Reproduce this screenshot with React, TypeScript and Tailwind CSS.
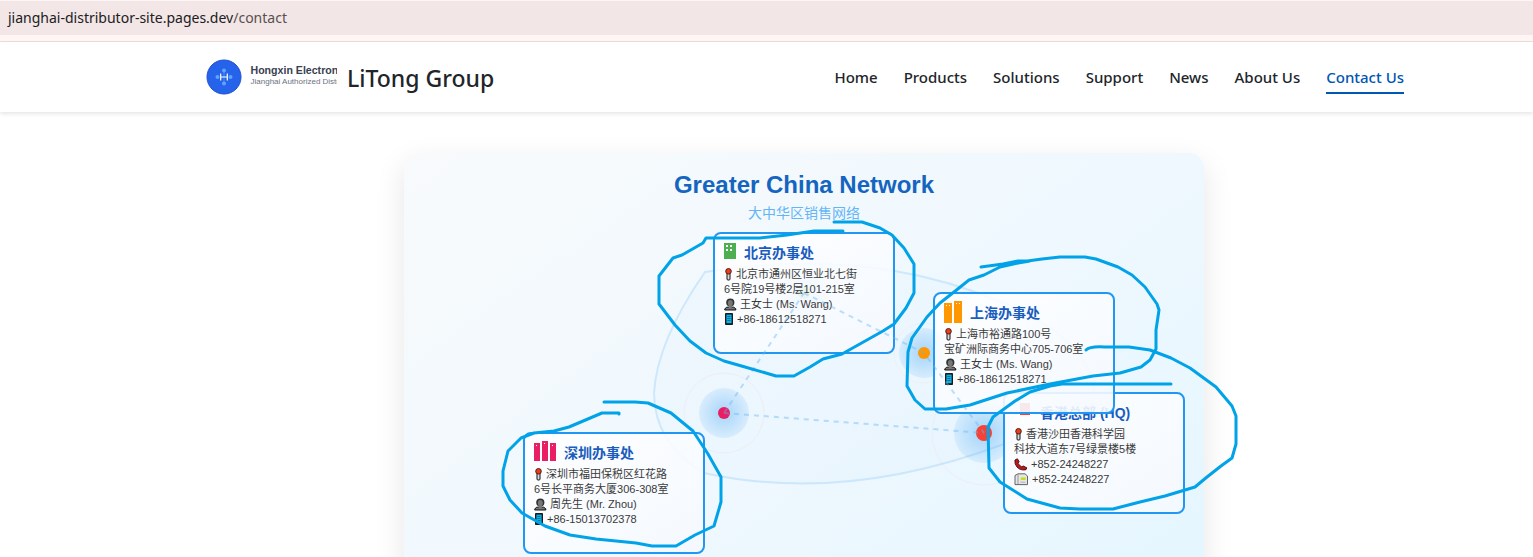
import type { ReactNode } from "react";

const navLinks = ["Home", "Products", "Solutions", "Support", "News", "About Us", "Contact Us"];

function PinIcon() {
  return (
    <svg width="9" height="14" viewBox="0 0 9 14" aria-hidden="true">
      <rect x="3" y="5" width="3" height="7" rx="1" fill="#ddd" stroke="#111" strokeWidth="1" />
      <circle cx="4.5" cy="3.3" r="2.8" fill="#f03a17" stroke="#3a1a14" strokeWidth="0.9" />
    </svg>
  );
}

function PersonIcon() {
  return (
    <svg width="13" height="14" viewBox="0 0 13 14" aria-hidden="true">
      <path d="M0.8 12V10.8L2.8 9.2h7L11.8 10.8V12Z" fill="#777" stroke="#111" strokeWidth="1" />
      <circle cx="6.3" cy="4.6" r="4.1" fill="#333" />
      <rect x="4.8" y="7" width="3" height="3" fill="#777" />
      <ellipse cx="6.3" cy="5" rx="2.5" ry="3" fill="#777" />
    </svg>
  );
}

function MobileIcon() {
  return (
    <svg width="10" height="14" viewBox="0 0 10 14" aria-hidden="true">
      <rect x="1" y="0" width="8" height="12" rx="0.8" fill="#1b1b1b" />
      <rect x="2.4" y="1.6" width="5.2" height="8.6" fill="#0db4e8" />
      <path d="M3.3 3.5h3.2M3.3 5.5h3.2M3.3 7.5h3.2" stroke="#075f86" strokeWidth="0.8" />
    </svg>
  );
}

function PhoneIcon() {
  return (
    <svg width="14" height="14" viewBox="0 0 14 14" aria-hidden="true">
      <path
        d="M1 2 3.4 0.8 5.2 3.8 4 5.2Q5.2 7.7 7.8 8.9L9.2 8 12.8 9.8 12 11.7Q6.2 12.8 3 9 0.3 5.9 1 2Z"
        fill="#c4161c"
        stroke="#3a0c0c"
        strokeWidth="0.9"
      />
    </svg>
  );
}

function FaxIcon() {
  return (
    <svg width="15" height="14" viewBox="0 0 15 14" aria-hidden="true">
      <path d="M1 2.5 4 0.8H11L13.5 3V11.6H1Z" fill="#e6e6e6" stroke="#555" strokeWidth="0.9" />
      <path d="M4 1V11" stroke="#999" strokeWidth="1" />
      <path d="M6.8 4.4h4.8v2.6H6.8Z" fill="#c3e020" />
      <path d="M6.5 9.2h5" stroke="#aaa" strokeWidth="0.9" />
    </svg>
  );
}

const icons: Record<string, () => ReactNode> = {
  pin: PinIcon,
  person: PersonIcon,
  mobile: MobileIcon,
  phone: PhoneIcon,
  fax: FaxIcon,
};

interface Office {
  name: string;
  place: string;
  building: ReactNode;
  lines: { icon?: string; text: string }[];
}

const offices: Office[] = [
  {
    name: "北京办事处",
    place: "left-[309px] top-[79px]",
    building: (
      <svg width="12" height="22" viewBox="0 0 12 22" aria-hidden="true">
        <rect y="2" width="12" height="16" fill="#4caf50" />
        <path d="M2 4h2v2h-2ZM6 4h2v2h-2ZM2 8h2v2h-2ZM6 8h2v2h-2Z" fill="#fff" />
      </svg>
    ),
    lines: [
      { icon: "pin", text: "北京市通州区恒业北七街" },
      { text: "6号院19号楼2层101-215室" },
      { icon: "person", text: "王女士 (Ms. Wang)" },
      { icon: "mobile", text: "+86-18612518271" },
    ],
  },
  {
    name: "香港总部 (HQ)",
    place: "left-[599px] top-[239px]",
    building: (
      <svg width="18" height="22" viewBox="0 0 18 22" aria-hidden="true">
        <rect x="6" y="2" width="10" height="12" fill="#f44336" />
      </svg>
    ),
    lines: [
      { icon: "pin", text: "香港沙田香港科学园" },
      { text: "科技大道东7号绿景楼5楼" },
      { icon: "phone", text: "+852-24248227" },
      { icon: "fax", text: "+852-24248227" },
    ],
  },
  {
    name: "上海办事处",
    place: "left-[529px] top-[139px]",
    building: (
      <svg width="18" height="22" viewBox="0 0 18 22" aria-hidden="true">
        <path d="M0 2h8v20h-8ZM10 0h8v22h-8Z" fill="#ff9800" />
        <path d="M2 4h1v1h-1ZM5 4h1v1h-1ZM12 2h1v1h-1ZM15 2h1v1h-1Z" fill="#fff" />
      </svg>
    ),
    lines: [
      { icon: "pin", text: "上海市裕通路100号" },
      { text: "宝矿洲际商务中心705-706室" },
      { icon: "person", text: "王女士 (Ms. Wang)" },
      { icon: "mobile", text: "+86-18612518271" },
    ],
  },
  {
    name: "深圳办事处",
    place: "left-[119px] top-[279px]",
    building: (
      <svg width="22" height="22" viewBox="0 0 22 22" aria-hidden="true">
        <path d="M0 2h6v18h-6ZM8 0h6v20h-6ZM16 2h6v18h-6Z" fill="#e91e63" />
        <path d="M2 4h1v1h-1ZM10 2h1v1h-1ZM18 4h1v1h-1Z" fill="#fff" />
      </svg>
    ),
    lines: [
      { icon: "pin", text: "深圳市福田保税区红花路" },
      { text: "6号长平商务大厦306-308室" },
      { icon: "person", text: "周先生 (Mr. Zhou)" },
      { icon: "mobile", text: "+86-15013702378" },
    ],
  },
];

function OfficeCard({ office }: { office: Office }) {
  return (
    <article
      className={`absolute h-[122px] w-[182px] rounded-lg border-2 border-[#2196f3] bg-linear-to-br from-white/90 to-[#f5f9ff]/90 px-[9px] pt-[7px] ${office.place}`}
    >
      <h3 className="mb-1 flex h-[22px] gap-2 text-sm leading-6 font-bold text-[#1a5dbe]">
        {office.building}
        {office.name}
      </h3>
      {office.lines.map((line, i) => {
        const Icon = line.icon ? icons[line.icon] : null;
        return (
          <p key={i} className="flex h-[15px] items-center gap-[3px] text-[11px] whitespace-nowrap text-[#3a3a3a]">
            {Icon && <Icon />}
            {line.text}
          </p>
        );
      })}
    </article>
  );
}

const markers = [
  { x: 400, y: 140, r: 6, halo: 25, ring: 50, color: "#4caf50" },
  { x: 520, y: 200, r: 6, halo: 25, ring: 30, color: "#ff9800" },
  { x: 320, y: 260, r: 6, halo: 25, ring: 40, color: "#e91e63" },
  { x: 580, y: 280, r: 8, halo: 30, ring: 52, color: "#f44336" },
];

function MapBackdrop() {
  return (
    <svg className="absolute inset-0" width="800" height="600" viewBox="0 0 800 600" aria-hidden="true">
      <defs>
        <radialGradient id="halo">
          <stop offset="0" stopColor="#2196f3" stopOpacity="0.35" />
          <stop offset="1" stopColor="#2196f3" stopOpacity="0.1" />
        </radialGradient>
      </defs>
      <path
        d="M301 119Q400 103 491 118Q545 127 600 150Q690 190 690 240Q665 275 600 291Q440 351 300 320Q250 290 250 240Q253 188 301 119Z"
        fill="#e3f2fd"
        fillOpacity="0.2"
        stroke="#bbdefb"
        strokeOpacity="0.65"
        strokeWidth="2"
      />
      {markers.map((m) => (
        <g key={m.color}>
          <circle cx={m.x} cy={m.y} r={m.ring} fill="none" stroke={m.color} strokeOpacity="0.05" />
          <circle cx={m.x} cy={m.y} r={m.halo} fill="url(#halo)" />
          <circle cx={m.x} cy={m.y} r={m.r} fill={m.color} />
        </g>
      ))}
    </svg>
  );
}

function Connections() {
  return (
    <svg
      className="pointer-events-none absolute inset-0"
      width="800"
      height="600"
      viewBox="0 0 800 600"
      aria-hidden="true"
    >
      <path
        d="M400 140L520 200L580 280M320 260L400 140M320 260L580 280"
        fill="none"
        stroke="#64b5f6"
        strokeOpacity="0.42"
        strokeWidth="2"
        strokeDasharray="5 5"
      />
    </svg>
  );
}

/* Freehand review marks circling each office card. */
function ReviewMarks() {
  return (
    <svg
      className="pointer-events-none absolute inset-0 overflow-visible"
      width="800"
      height="600"
      viewBox="404 153 800 600"
      fill="none"
      stroke="#00a2e8"
      strokeWidth="3"
      strokeLinecap="round"
      strokeLinejoin="round"
      aria-hidden="true"
    >
      <path d="M843 231H814L787 235L760 238H706L703 243L682 255L673 258L659 276V304L675 325L690 341L706 353L724 361L745 367L776 376H794L810 367L823 359L842 354L883 331L894 324L906 308L914 293V264L904 248L892 235L880 228L862 222H834" />
      <path d="M981 267L1003 264L1018 261L1030 261L1018 263L1000 267L984 275L969 280L954 292L940 303L927 317L912 338L908 352L907 386L915 400L925 409H946L970 405L1007 393L1050 384L1093 376L1120 373L1141 367L1150 360L1156 349V330L1159 310L1157 304L1145 287L1132 275L1118 267L1096 259L1085 257H1060L1042 259L1020 262" />
      <path d="M1086 350Q1090 346 1105 347H1129L1150 350L1171 358L1190 368L1216 387L1232 406L1236 416V444L1232 458L1221 466L1207 477L1195 487L1165 496L1140 502L1113 509H1080L1060 508L1027 499L1000 482L989 468L988 427L993 417L1015 401L1030 392L1050 386L1062 384H1171" />
      <path d="M619 414V413H602L569 427L554 431L534 433L521 438L508 451L503 471V486L510 500L522 513L545 526L570 535L596 539L636 543L652 546H676L695 535L714 526L721 502V477L708 454L693 431L671 413L648 403L635 402H604" />
    </svg>
  );
}

function Logo() {
  return (
    <svg width="133" height="40" viewBox="0 0 133 40" role="img" aria-label="Hongxin Electronics">
      <circle cx="20" cy="20" r="17" fill="#2563eb" stroke="#1d4ed8" />
      <g fill="#60a5fa">
        <circle cx="13.5" cy="20" r="2" />
        <circle cx="26.5" cy="20" r="2" />
        <circle cx="20" cy="13.5" r="2" />
        <circle cx="20" cy="26.5" r="2" />
        <path d="M19.5 13h1v14h-1Z" opacity="0.7" />
      </g>
      <path d="M16.7 16.5v7M23.3 16.5v7M16.7 20h6.6" stroke="#fff" strokeWidth="1.2" />
      <text x="46.5" y="17" fontSize="10.6" fontWeight="700" fill="#374151" fontFamily="Liberation Sans, sans-serif">
        Hongxin Electron
      </text>
      <text x="46.5" y="27" fontSize="8" fill="#6b7280" fontFamily="Liberation Sans, sans-serif">
        Jianghai Authorized Distri
      </text>
    </svg>
  );
}

export default function App() {
  return (
    <div className="flex h-screen flex-col overflow-hidden bg-white font-['Noto_Sans','Noto_Sans_CJK_SC',sans-serif]">
      <div className="border-t border-b border-t-[#fff5f4] border-b-[#ecdcdb] bg-[#fff5f4] pb-1.5">
        <p className="h-[34px] bg-[#f2e6e6] pl-2 text-sm leading-[34px] text-[#202020]">
          jianghai-distributor-site.pages.dev<span className="text-[#5a4f4f]">/contact</span>
        </p>
      </div>

      <header className="relative z-10 bg-white pl-[75px] shadow-[0_2px_4px_rgba(0,0,0,0.1)]">
        <div className="mx-auto flex h-[70px] max-w-[1200px] items-center justify-between">
          <a href="#home" className="flex items-center gap-2.5 text-[23px] font-medium text-[#212529]">
            <Logo />
            <span className="pt-0.5">LiTong Group</span>
          </a>
          <nav className="flex gap-[26px]">
            {navLinks.map((label) => (
              <a
                key={label}
                href="#"
                aria-current={label === "Contact Us" ? "page" : undefined}
                className={
                  label === "Contact Us"
                    ? "border-b-2 border-[#0056b3] pt-1.5 pb-1 text-[15px] leading-[22px] font-medium text-[#0056b3]"
                    : "border-b-2 border-transparent pt-1.5 pb-1 text-[15px] leading-[22px] font-medium text-[#212529]"
                }
              >
                {label}
              </a>
            ))}
          </nav>
        </div>
      </header>

      <main className="flex-1 overflow-hidden pt-[41px] pl-[75px]">
        <section className="relative mx-auto h-[600px] w-[800px] rounded-[15px] bg-linear-to-br from-[#f8fafc] via-[#eef8fe] to-[#e1f5fe] font-['Liberation_Sans','Noto_Sans_CJK_SC',sans-serif] shadow-[0_10px_30px_rgba(0,0,0,0.1)]">
          <MapBackdrop />
          <div className="relative pt-4 text-center">
            <h1 className="text-2xl leading-8 font-bold text-[#1565c0]">Greater China Network</h1>
            <p className="mt-0.5 text-sm leading-5 text-[#64b5f6]">大中华区销售网络</p>
          </div>
          {offices.map((office) => (
            <OfficeCard key={office.name} office={office} />
          ))}
          <Connections />
          <ReviewMarks />
        </section>
      </main>
    </div>
  );
}
